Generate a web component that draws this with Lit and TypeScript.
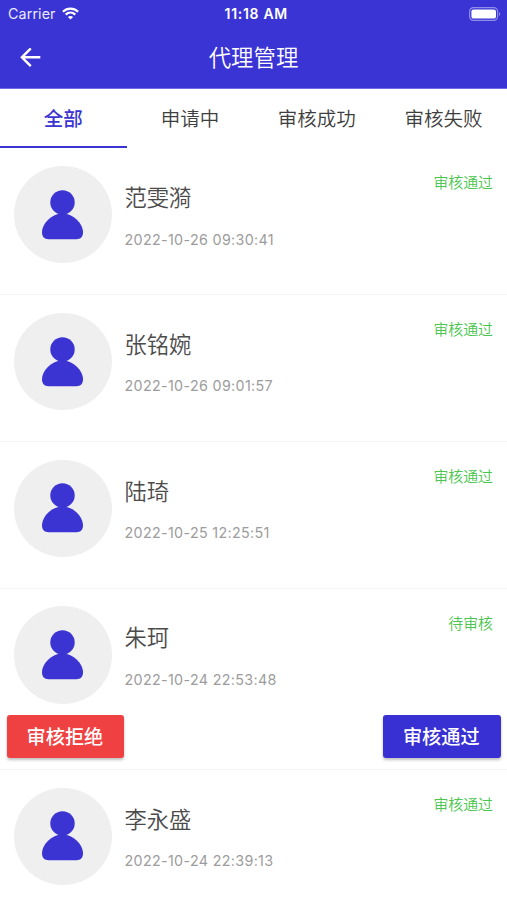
import { LitElement, html, css, svg } from "lit";
import { customElement, property, state } from "lit/decorators.js";
import { classMap } from "lit/directives/class-map.js";

interface Agent {
  name: string;
  time: string;
  status: string;
  pending?: boolean;
}

const TABS = ["全部", "申请中", "审核成功", "审核失败"];

const AGENTS: Agent[] = [
  { name: "范雯漪", time: "2022-10-26 09:30:41", status: "审核通过" },
  { name: "张铭婉", time: "2022-10-26 09:01:57", status: "审核通过" },
  { name: "陆琦", time: "2022-10-25 12:25:51", status: "审核通过" },
  { name: "朱珂", time: "2022-10-24 22:53:48", status: "待审核", pending: true },
  { name: "李永盛", time: "2022-10-24 22:39:13", status: "审核通过" },
];

const person = svg`
  <circle cx="20.500" cy="12.400" r="12.200"></circle>
  <path d="M20.500 23.500C9.500 23.800 0 33.500 0 42.500C0 46.800 2.500 49.200 6.500 49.200H34.500C38.500 49.200 41 46.800 41 42.500C41 33.500 31.500 23.800 20.500 23.500Z"></path>`;

@customElement("status-bar")
export class StatusBar extends LitElement {
  static styles = css`
    :host {
      display: grid;
      grid-template-columns: 1fr auto 1fr;
      align-items: center;
      height: 27px;
      padding: 0 6px 0 8px;
      color: #fff;
      font: 400 14.3px/27px Inter, "Liberation Sans", sans-serif;
    }
    .carrier {
      display: flex;
      align-items: center;
      gap: 6.500px;
      color: #e9e8fc;
      letter-spacing: 0.1px;
    }
    .clock {
      font-weight: 600;
      font-size: 14px;
      letter-spacing: 0.7px;
      padding-left: 3.500px;
    }
    .battery {
      justify-self: end;
    }
    svg {
      display: block;
    }
    .wifi {
      position: relative;
      top: -0.5px;
    }
  `;

  render() {
    return html`
      <span class="carrier">
        Carrier
        <svg class="wifi" width="17" height="13" viewBox="0 0 17 13" fill="none" stroke="#fff" stroke-width="2.200">
          <path d="M0.900 4.700C5.300 0.500 11.700 0.500 16.100 4.700"></path>
          <path d="M3.700 7.600C6.500 5 10.500 5 13.300 7.600"></path>
          <path d="M8.500 12.600L5.900 10C7.400 8.600 9.600 8.600 11.100 10Z" fill="#fff" stroke="none"></path>
        </svg>
      </span>
      <span class="clock">11:18 AM</span>
      <svg class="battery" width="32" height="14" viewBox="0 0 32 14">
        <rect x="0.600" y="0.600" width="28" height="12.800" rx="3.800" fill="none" stroke="#918dea" stroke-width="1.200"></rect>
        <rect x="2.400" y="2.400" width="24.600" height="9.200" rx="2.200" fill="#fff"></rect>
        <path d="M30 5V9C31.300 8.500 31.300 5.500 30 5Z" fill="#a19eee"></path>
      </svg>
    `;
  }
}

@customElement("agent-row")
export class AgentRow extends LitElement {
  @property({ attribute: false }) agent!: Agent;

  static styles = css`
    :host {
      display: block;
      box-sizing: border-box;
      border-bottom: 1px solid #f5f5f5;
      background: #fff;
    }
    .info {
      display: flex;
      height: 97.5px;
      padding: 17.300px 14px 0;
    }
    .info.plain {
      padding-bottom: 31px;
    }
    .info.review {
      padding-bottom: 11px;
    }
    .avatar {
      display: grid;
      place-items: center;
      width: 97.5px;
      height: 97.5px;
      border-radius: 50%;
      background: #efefef;
      fill: #3b34d3;
    }
    .text {
      flex: 1;
      padding: 17px 0 0 13px;
    }
    .name {
      color: #4b4b4b;
      font-size: 22.3px;
      font-weight: 350;
      line-height: 30px;
    }
    .time {
      margin-top: 16.700px;
      color: #9c9c9c;
      font-size: 14.300px;
      line-height: 20px;
      letter-spacing: 0.34px;
    }
    .status {
      color: #4ac64e;
      font-size: 14.900px;
      font-weight: 350;
      line-height: 20px;
      padding-top: 7.300px;
    }
    .actions {
      display: flex;
      justify-content: space-between;
      padding: 0 6.500px 11.400px 6.700px;
    }
    button {
      width: 117.500px;
      height: 43px;
      padding: 0 1px 0 0;
      border: 0;
      border-radius: 3px;
      color: #fff;
      font: 500 19.200px/41px "Noto Sans CJK SC", sans-serif;
      box-shadow: 0 2px 3px rgba(0, 0, 0, 0.25);
    }
    .reject {
      background: #f04142;
    }
    .approve {
      background: #3830d3;
    }
  `;

  render() {
    const { name, time, status, pending } = this.agent;
    return html`
      <div class=${classMap({ info: true, review: !!pending, plain: !pending })}>
        <div class="avatar">
          <svg width="41" height="50" viewBox="0 0 41 50">${person}</svg>
        </div>
        <div class="text">
          <div class="name">${name}</div>
          <div class="time">${time}</div>
        </div>
        <div class="status">${status}</div>
      </div>
      ${pending
        ? html`<div class="actions">
            <button class="reject">审核拒绝</button>
            <button class="approve">审核通过</button>
          </div>`
        : null}
    `;
  }
}

@customElement("app-root")
export class AppRoot extends LitElement {
  @state() private active = 0;

  static styles = css`
    :host {
      display: block;
      height: 900px;
      overflow: hidden;
      background: #fff;
      font-family: Inter, "Noto Sans CJK SC", sans-serif;
    }
    .header {
      box-sizing: border-box;
      height: 89px;
      background: #3b34d5;
      border-bottom: 1px solid #6f6ae0;
    }
    .nav {
      display: grid;
      grid-template-columns: 60px 1fr 60px;
      align-items: center;
      height: 60px;
      color: #fff;
    }
    .back {
      display: block;
      margin-left: 20px;
    }
    .title {
      text-align: center;
      font-size: 22.400px;
      font-weight: 350;
      line-height: 61px;
    }
    .tabs {
      display: grid;
      grid-template-columns: repeat(4, 1fr);
      height: 59px;
      padding-bottom: 0.7px;
    }
    .tab {
      box-sizing: border-box;
      border-bottom: 2px solid transparent;
      color: #3e3e3e;
      font-size: 19.500px;
      font-weight: 350;
      line-height: 61px;
      height: 59px;
      text-align: center;
    }
    .tab.active {
      color: #3b34d3;
      border-color: #3b34d3;
      font-weight: 500;
    }
  `;

  render() {
    return html`
      <div class="header">
        <status-bar></status-bar>
        <div class="nav">
          <svg class="back" width="21" height="20" viewBox="0 0 21 20" fill="none" stroke="#fff" stroke-width="2.400">
            <path d="M10.800 0.400L1.900 9.300L10.800 18.200M2.200 9.300H20.300"></path>
          </svg>
          <div class="title">代理管理</div>
        </div>
      </div>
      <div class="tabs">
        ${TABS.map(
          (label, i) => html`<div
            class=${classMap({ tab: true, active: i === this.active })}
            @click=${() => (this.active = i)}
          >${label}</div>`
        )}
      </div>
      ${AGENTS.map((agent) => html`<agent-row .agent=${agent}></agent-row>`)}
    `;
  }
}
